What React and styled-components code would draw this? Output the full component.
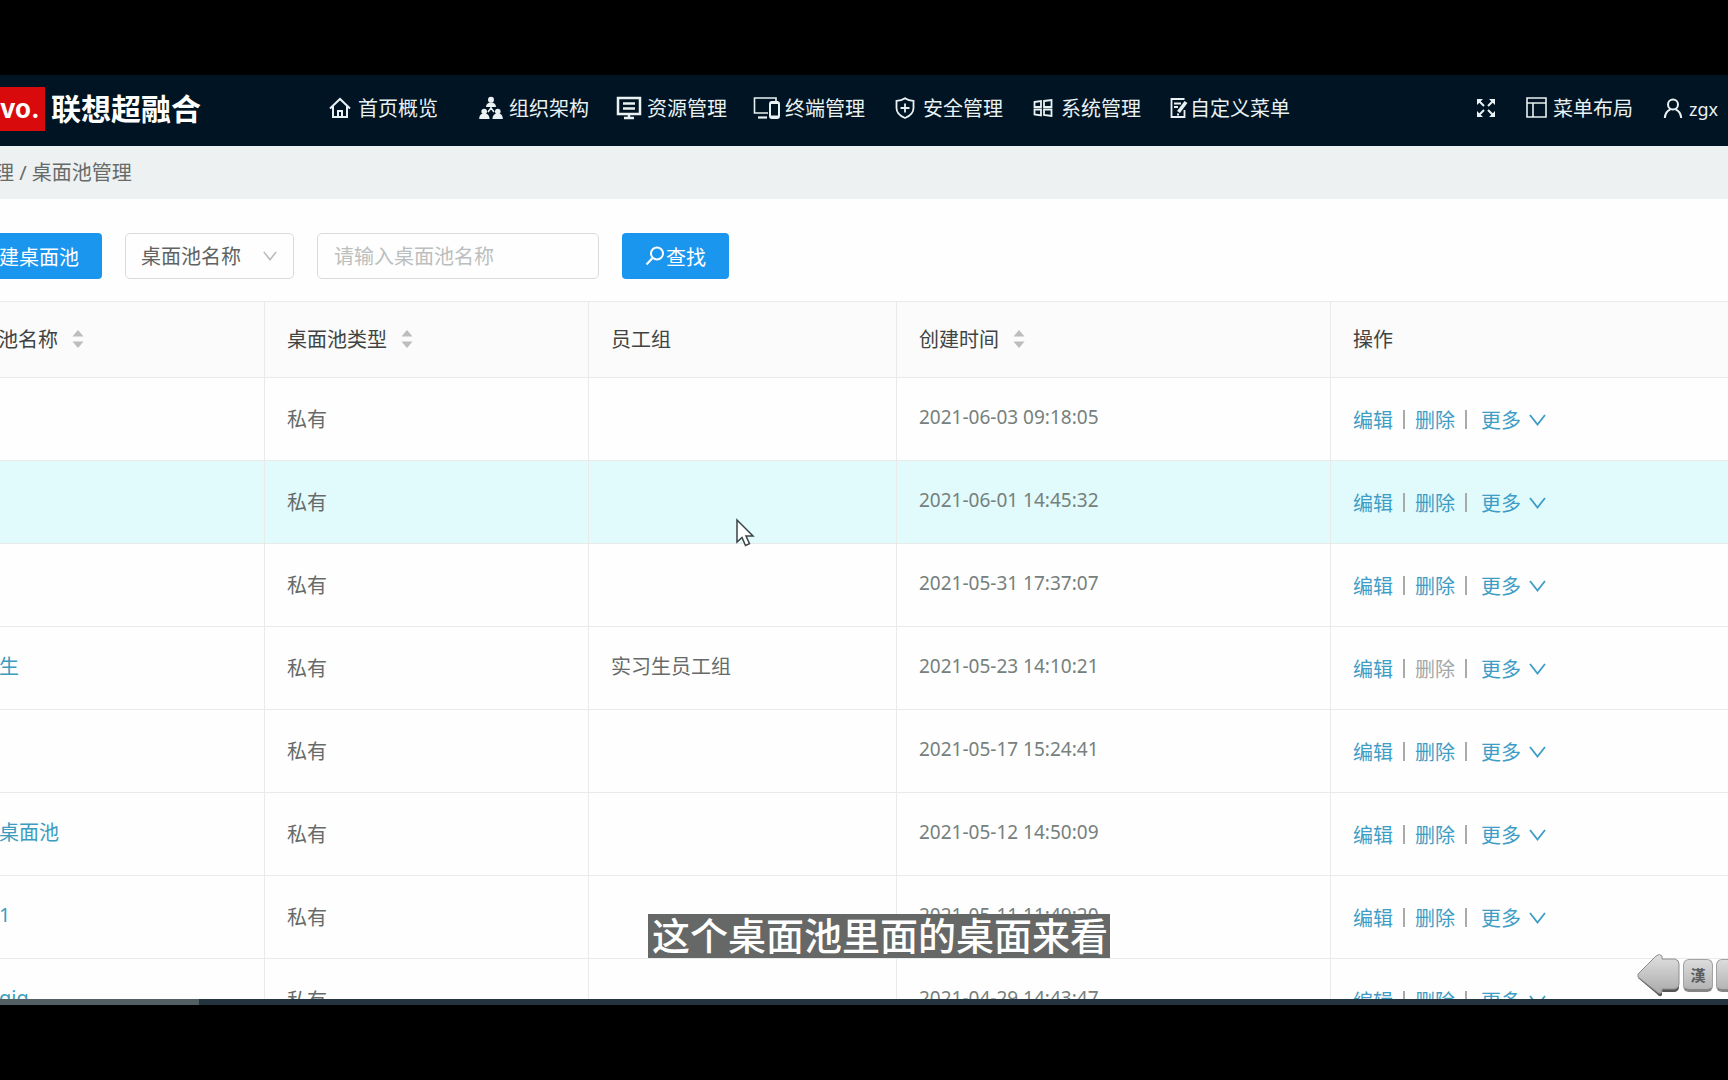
import React from "react";
import styled, { createGlobalStyle, css } from "styled-components";

const GlobalStyle = createGlobalStyle`
  * {
    box-sizing: border-box;
  }
  body {
    margin: 0;
    background: #000;
    font-family: "Noto Sans", "Noto Sans CJK SC", sans-serif;
    font-size: 20px;
    color: #666b6a;
  }
  button, input, select {
    font-family: inherit;
    font-size: 20px;
  }
`

const Screen = styled.div`
  height: 100vh;
  padding: 75px 0;
  display: flex;
  flex-direction: column;
  overflow: hidden;
`

const Page = styled.div`
  position: relative;
  flex: 1;
  min-height: 0;
  display: flex;
  flex-direction: column;
  overflow: hidden;
  background: #fdfefd;
`

const Header = styled.header`
  display: flex;
  flex-shrink: 0;
  align-items: center;
  height: 71px;
  padding: 0 10px 4px 0;
  background: #001423;
  color: #e9f1f3;
`

const Brand = styled.div`
  display: flex;
  align-items: center;
  gap: 6px;
  width: 326px;
`

const Logo = styled.span`
  display: flex;
  align-items: center;
  height: 44px;
  width: 45px;
  background: #d90a0c;
  color: #fff;
  font-family: Inter, sans-serif;
  font-size: 26px;
  font-weight: bold;
`

const BrandName = styled.span`
  padding-bottom: 4px;
  font-family: "Noto Sans CJK SC", sans-serif;
  font-size: 30px;
  font-weight: bold;
  line-height: 44px;
  color: #fff;
`

const Nav = styled.nav`
  display: flex;
  gap: 26px;
`

const NavLink = styled.a`
  display: flex;
  align-items: center;
  line-height: 30px;
  margin-right: ${props => props.$wide ? "13px" : "0"};
  color: inherit;
  text-decoration: none;
  white-space: nowrap;
`

const IconSlot = styled.span`
  display: flex;
  justify-content: center;
  width: ${props => props.$tight ? "23px" : "32px"};
  padding-right: ${props => props.$tight ? "0" : "5px"};
  padding-bottom: 2px;
`

const Tools = styled.div`
  display: flex;
  align-items: center;
  gap: 30px;
  margin-left: auto;
`

const ToolButton = styled.button`
  display: flex;
  align-items: center;
  gap: 6px;
  padding: 0;
  border: 0;
  background: none;
  color: inherit;
  line-height: 30px;
  font-size: ${props => props.$latin ? "18px" : "20px"};
  svg {
    margin-bottom: 2px;
  }
`

const Breadcrumb = styled.div`
  flex-shrink: 0;
  height: 53px;
  margin-left: -6px;
  line-height: 53px;
  background: #edf1f2;
  white-space: pre;
`

const Toolbar = styled.form`
  display: flex;
  flex-shrink: 0;
  gap: 23px;
  padding: 34px 0 22px;
`

const control = css`
  height: 46px;
  border: 1px solid #d9dcdc;
  border-radius: 5px;
  background: #fdfefd;
`

const PrimaryButton = styled.button`
  display: flex;
  align-items: center;
  justify-content: center;
  gap: 1px;
  height: 46px;
  padding: 0 23px;
  border: 0;
  border-radius: 4px;
  background: #1b96ee;
  color: #fff;
`

const CreateButton = styled(PrimaryButton)`
  margin-left: -24px;
`

const SelectBox = styled.div`
  display: grid;
  align-items: center;
  width: 169px;
  > * {
    grid-area: 1 / 1;
  }
  svg {
    justify-self: end;
    margin-right: 17px;
    color: #b5b9b9;
    pointer-events: none;
  }
`

const Select = styled.select`
  ${control}
  width: 100%;
  padding: 0 15px;
  appearance: none;
  color: #5f6463;
`

const SearchInput = styled.input`
  ${control}
  width: 282px;
  padding: 0 16px;
  &::placeholder {
    color: #bcbfbf;
  }
`

const Table = styled.table`
  width: 100%;
  flex-shrink: 0;
  table-layout: fixed;
  border-collapse: separate;
  border-spacing: 0;
  border-top: 1px solid #e8ebea;
`

const HeadCell = styled.th`
  height: 76px;
  padding: 0 22px 2px;
  border-right: 1px solid #e8ebea;
  border-bottom: 1px solid #e8ebea;
  background: #fafbfa;
  color: #3f4443;
  font-weight: normal;
  text-align: left;
  white-space: nowrap;
  &:first-child {
    padding-left: 0;
  }
  &:last-child {
    border-right: 0;
  }
`

const HeadLabel = styled.span`
  display: flex;
  align-items: center;
  gap: 14px;
  margin-left: ${props => props.$cut ? "-2px" : "0"};
`

const Row = styled.tr`
  background: ${props => props.$active ? "#e1fafb" : "transparent"};
`

const Cell = styled.td`
  height: 83px;
  padding: 0 22px 1px;
  border-right: 1px solid #e8ebea;
  border-bottom: 1px solid #e8ebea;
  white-space: nowrap;
  &:last-child {
    border-right: 0;
  }
`

const NameCell = styled(Cell)`
  padding: 0 0 6px;
`

const DateCell = styled(Cell)`
  padding-bottom: 4px;
  font-size: 19px;
  color: #76807d;
`

const GroupCell = styled(Cell)`
  padding-bottom: 6px;
`

const PoolLink = styled.a`
  display: block;
  margin-left: -1px;
  color: #3c9cc0;
  text-decoration: none;
`

const Actions = styled.div`
  display: flex;
  align-items: center;
  padding-top: 2px;
`

const Action = styled.a`
  display: flex;
  align-items: center;
  gap: 8px;
  color: ${props => props.$disabled ? "#a3a8a8" : "#3d9dc6"};
  text-decoration: none;
`

const Divider = styled.span`
  width: 2px;
  height: 19px;
  margin: 0 ${props => props.$last ? "14px" : "10px"} 0 10px;
  background: #a9abab;
`

const Progress = styled.div`
  flex-shrink: 0;
  height: 6px;
  background: #23343e;
`

const Played = styled.div`
  height: 100%;
  background: #536063;
`

const Subtitle = styled.p`
  position: absolute;
  left: 50%;
  bottom: 47px;
  transform: translateX(15px) translateX(-50%);
  margin: 0;
  padding: 0 2px 4px 4px;
  background: #656866;
  color: #fff;
  font-family: "Noto Sans CJK SC", sans-serif;
  font-size: 38px;
  font-weight: 500;
  line-height: 40px;
  white-space: nowrap;
`

const Cursor = styled.svg`
  position: absolute;
  left: 735px;
  top: 443px;
`

const ImeBar = styled.div`
  position: absolute;
  right: -18px;
  bottom: 8px;
  display: flex;
  align-items: center;
  gap: 3px;
`

const ImeKey = styled.button`
  width: 30px;
  height: 33px;
  padding: 0;
  border: 1px solid #a2a2a2;
  border-bottom: 3px solid #858585;
  border-radius: 6px;
  background: linear-gradient(#dcdcdc, #b4b4b4);
  color: #5c5c5c;
  font-size: 15px;
  font-weight: bold;
  line-height: 26px;
`

const line = { fill: "none", stroke: "currentColor", strokeWidth: 2 }

function HomeIcon() {
  return (
    <svg width="22" height="22" viewBox="0 0 22 22" {...line}>
      <path d="M1 11.5 11 2l10 9.5M4 9.5V20h14V9.5M9 20v-6h4v6" />
    </svg>
  )
}

function OrgIcon() {
  return (
    <svg width="24" height="24" viewBox="0 0 24 24" fill="currentColor">
      <circle cx="12" cy="3.8" r="3" />
      <path d="M7 11c0-3 2-4.500 5-4.500s5 1.500 5 4.500z" />
      <circle cx="5.200" cy="15.500" r="2.800" />
      <path d="M.2 23c0-3.500 1.500-5.500 5-5.500s5.300 2 5.300 5.500z" />
      <circle cx="18.800" cy="15.500" r="2.800" />
      <path d="M13.500 23c0-3.500 1.800-5.500 5.300-5.500s5 2 5 5.500z" />
      <path d="M12 11v2M12 12l-3 4M12 12l3 4" stroke="currentColor" strokeWidth="1.500" />
    </svg>
  )
}

function ResourceIcon() {
  return (
    <svg width="26" height="24" viewBox="0 0 26 24" {...line}>
      <path d="M2 2h22v16H2zM7 7.500h12M7 12.500h12M13 18v4M8 22h10" strokeWidth="2.500" />
    </svg>
  )
}

function TerminalIcon() {
  return (
    <svg width="27" height="24" viewBox="0 0 27 24" {...line}>
      <path d="M15 17H1.500V2H23v3" strokeWidth="1.600" />
      <path d="M5 21.500h9" strokeWidth="2.200" />
      <rect x="17" y="6" width="9" height="16" rx="2" />
      <path d="M18 6.500h7M18 21h7" strokeWidth="3" />
    </svg>
  )
}

function ShieldIcon() {
  return (
    <svg width="20" height="22" viewBox="0 0 20 22" {...line} strokeWidth="1.800">
      <path d="M10 1.200c2.500 1.800 5.300 2.500 8.500 2.600V11c0 4.800-3.500 8-8.500 10-5-2-8.500-5.200-8.500-10V3.800C4.700 3.700 7.500 3 10 1.200zM10 6.500v9M5.500 11h9" />
    </svg>
  )
}

function SystemIcon() {
  return (
    <svg width="20" height="18" viewBox="0 0 20 18" {...line} strokeWidth="1.800">
      <path d="M1.500 3 8 2v6H1.500zM11 2l7.500-1v7H11zM1.500 10.500H8v6l-6.500-1zM11 10.500h7.500V17L11 16z" />
    </svg>
  )
}

function EditIcon() {
  return (
    <svg width="18" height="20" viewBox="0 0 18 20" {...line} strokeWidth="1.800">
      <path d="M14.500 1H1.500v18h13v-7M4 5.500h7M4 9h4" />
      <path d="m16 4-7.500 10" strokeWidth="3.600" />
      <path d="M7 16.500h2" />
    </svg>
  )
}

function ExpandIcon() {
  return (
    <svg width="20" height="20" viewBox="0 0 20 20" fill="currentColor">
      <path d="M1 1h6L1 7zM19 1v6l-6-6zM1 19v-6l6 6zM19 19h-6l6-6z" />
      <path d="m3 3 5 5M17 3l-5 5M3 17l5-5M17 17l-5-5" stroke="currentColor" strokeWidth="2" />
    </svg>
  )
}

function LayoutIcon() {
  return (
    <svg width="21" height="21" viewBox="0 0 21 21" {...line} strokeWidth="1.600">
      <path d="M1 1h19v19H1zM1 6h19M7 6v14" />
    </svg>
  )
}

function UserIcon() {
  return (
    <svg width="20" height="20" viewBox="0 0 20 20" {...line}>
      <circle cx="10" cy="6.500" r="5" />
      <path d="M1.800 20c.4-4.500 3-7.500 5.500-8.500M18.200 20c-.4-4.500-3-7.500-5.500-8.500" />
    </svg>
  )
}

function SearchIcon() {
  return (
    <svg width="20" height="20" viewBox="0 0 20 20" {...line}>
      <circle cx="12" cy="7.500" r="6" />
      <path d="M7.500 12 1.500 18.500" />
    </svg>
  )
}

function ChevronIcon({ width = 17 }) {
  return (
    <svg width={width} height="12" viewBox="0 0 17 12" {...line} strokeWidth="1.800">
      <path d="m1 1 7.500 9.500L16 1" />
    </svg>
  )
}

function SortIcon() {
  return (
    <svg width="12" height="18" viewBox="0 0 12 18" fill="#bbbebd">
      <path d="M6 0l5.500 6.500H.5zM6 18l5.500-6.500H.5z" />
    </svg>
  )
}

function ImeArrow() {
  return (
    <svg width="43" height="43" viewBox="0 0 43 43">
      <defs>
        <linearGradient id="metal" x1="0" y1="0" x2="0" y2="1">
          <stop offset="0" stopColor="#e0e0e0" />
          <stop offset="1" stopColor="#aaa" />
        </linearGradient>
      </defs>
      <path d="M1 24 20 40q3 4 5 1v-3h13q4-1 4-5V12L22 8z" fill="#555" />
      <path d="M1 20 19 2q4-3 6 0v3h13q4 1 4 5v20q0 4-4 5H25v3q-2 3-5 0L1 23z" fill="url(#metal)" stroke="#8e8e8e" />
    </svg>
  )
}

const navItems = [
  { label: "首页概览", icon: <HomeIcon />, wide: true },
  { label: "组织架构", icon: <OrgIcon /> },
  { label: "资源管理", icon: <ResourceIcon /> },
  { label: "终端管理", icon: <TerminalIcon /> },
  { label: "安全管理", icon: <ShieldIcon /> },
  { label: "系统管理", icon: <SystemIcon /> },
  { label: "自定义菜单", icon: <EditIcon />, tight: true },
]

const columns = [
  { label: "池名称", sort: true, cut: true },
  { label: "桌面池类型", sort: true },
  { label: "员工组" },
  { label: "创建时间", sort: true },
  { label: "操作" },
]

const pools = [
  { name: "", group: "", created: "2021-06-03 09:18:05" },
  { name: "", group: "", created: "2021-06-01 14:45:32", active: true },
  { name: "", group: "", created: "2021-05-31 17:37:07" },
  { name: "生", group: "实习生员工组", created: "2021-05-23 14:10:21", locked: true },
  { name: "", group: "", created: "2021-05-17 15:24:41" },
  { name: "桌面池", group: "", created: "2021-05-12 14:50:09" },
  { name: "1", group: "", created: "2021-05-11 11:49:20" },
  { name: "gig", group: "", created: "2021-04-29 14:43:47" },
]

const TableArea = styled.div`
  flex: 1;
  min-height: 0;
  overflow: hidden;
`

function PoolTable() {
  return (
    <Table>
      <colgroup>
        <col style={{ width: "265px" }} />
        <col style={{ width: "324px" }} />
        <col style={{ width: "308px" }} />
        <col style={{ width: "434px" }} />
        <col />
      </colgroup>
      <thead>
        <tr>
          {columns.map(col => (
            <HeadCell key={col.label}>
              <HeadLabel $cut={col.cut}>
                {col.label}
                {col.sort && <SortIcon />}
              </HeadLabel>
            </HeadCell>
          ))}
        </tr>
      </thead>
      <tbody>
        {pools.map(pool => (
          <Row key={pool.created} $active={pool.active}>
            <NameCell>{pool.name && <PoolLink href="#">{pool.name}</PoolLink>}</NameCell>
            <Cell>私有</Cell>
            <GroupCell>{pool.group}</GroupCell>
            <DateCell>{pool.created}</DateCell>
            <Cell>
              <Actions>
                <Action href="#">编辑</Action>
                <Divider />
                <Action href="#" $disabled={pool.locked}>删除</Action>
                <Divider $last />
                <Action href="#">更多 <ChevronIcon /></Action>
              </Actions>
            </Cell>
          </Row>
        ))}
      </tbody>
    </Table>
  )
}

function App() {
  return (
    <Screen>
      <GlobalStyle />
      <Page>
        <Header>
          <Brand>
            <Logo>vo.</Logo>
            <BrandName>联想超融合</BrandName>
          </Brand>
          <Nav>
            {navItems.map(item => (
              <NavLink key={item.label} href="#" $wide={item.wide}>
                <IconSlot $tight={item.tight}>{item.icon}</IconSlot>
                {item.label}
              </NavLink>
            ))}
          </Nav>
          <Tools>
            <ToolButton aria-label="全屏"><ExpandIcon /></ToolButton>
            <ToolButton><LayoutIcon />菜单布局</ToolButton>
            <ToolButton $latin><UserIcon />zgx</ToolButton>
          </Tools>
        </Header>
        <Breadcrumb>理 / 桌面池管理</Breadcrumb>
        <Toolbar>
          <CreateButton type="button">建桌面池</CreateButton>
          <SelectBox>
            <Select aria-label="查找字段" defaultValue="name">
              <option value="name">桌面池名称</option>
            </Select>
            <ChevronIcon width={14} />
          </SelectBox>
          <SearchInput aria-label="桌面池名称" placeholder="请输入桌面池名称" />
          <PrimaryButton type="button"><SearchIcon />查找</PrimaryButton>
        </Toolbar>
        <TableArea>
          <PoolTable />
        </TableArea>
        <Progress>
          <Played style={{ width: "11.5%" }} />
        </Progress>
        <Cursor width="20" height="30" viewBox="0 0 20 30">
          <path d="M2 2v22l5-4.500 3.500 8 4-1.800-3.500-7.700h7z" fill="#fff" stroke="#3b4448" strokeWidth="1.500" />
        </Cursor>
        <Subtitle>这个桌面池里面的桌面来看</Subtitle>
        <ImeBar>
          <ImeArrow />
          <ImeKey>漢</ImeKey>
          <ImeKey>•</ImeKey>
        </ImeBar>
      </Page>
    </Screen>
  )
}

export default App
